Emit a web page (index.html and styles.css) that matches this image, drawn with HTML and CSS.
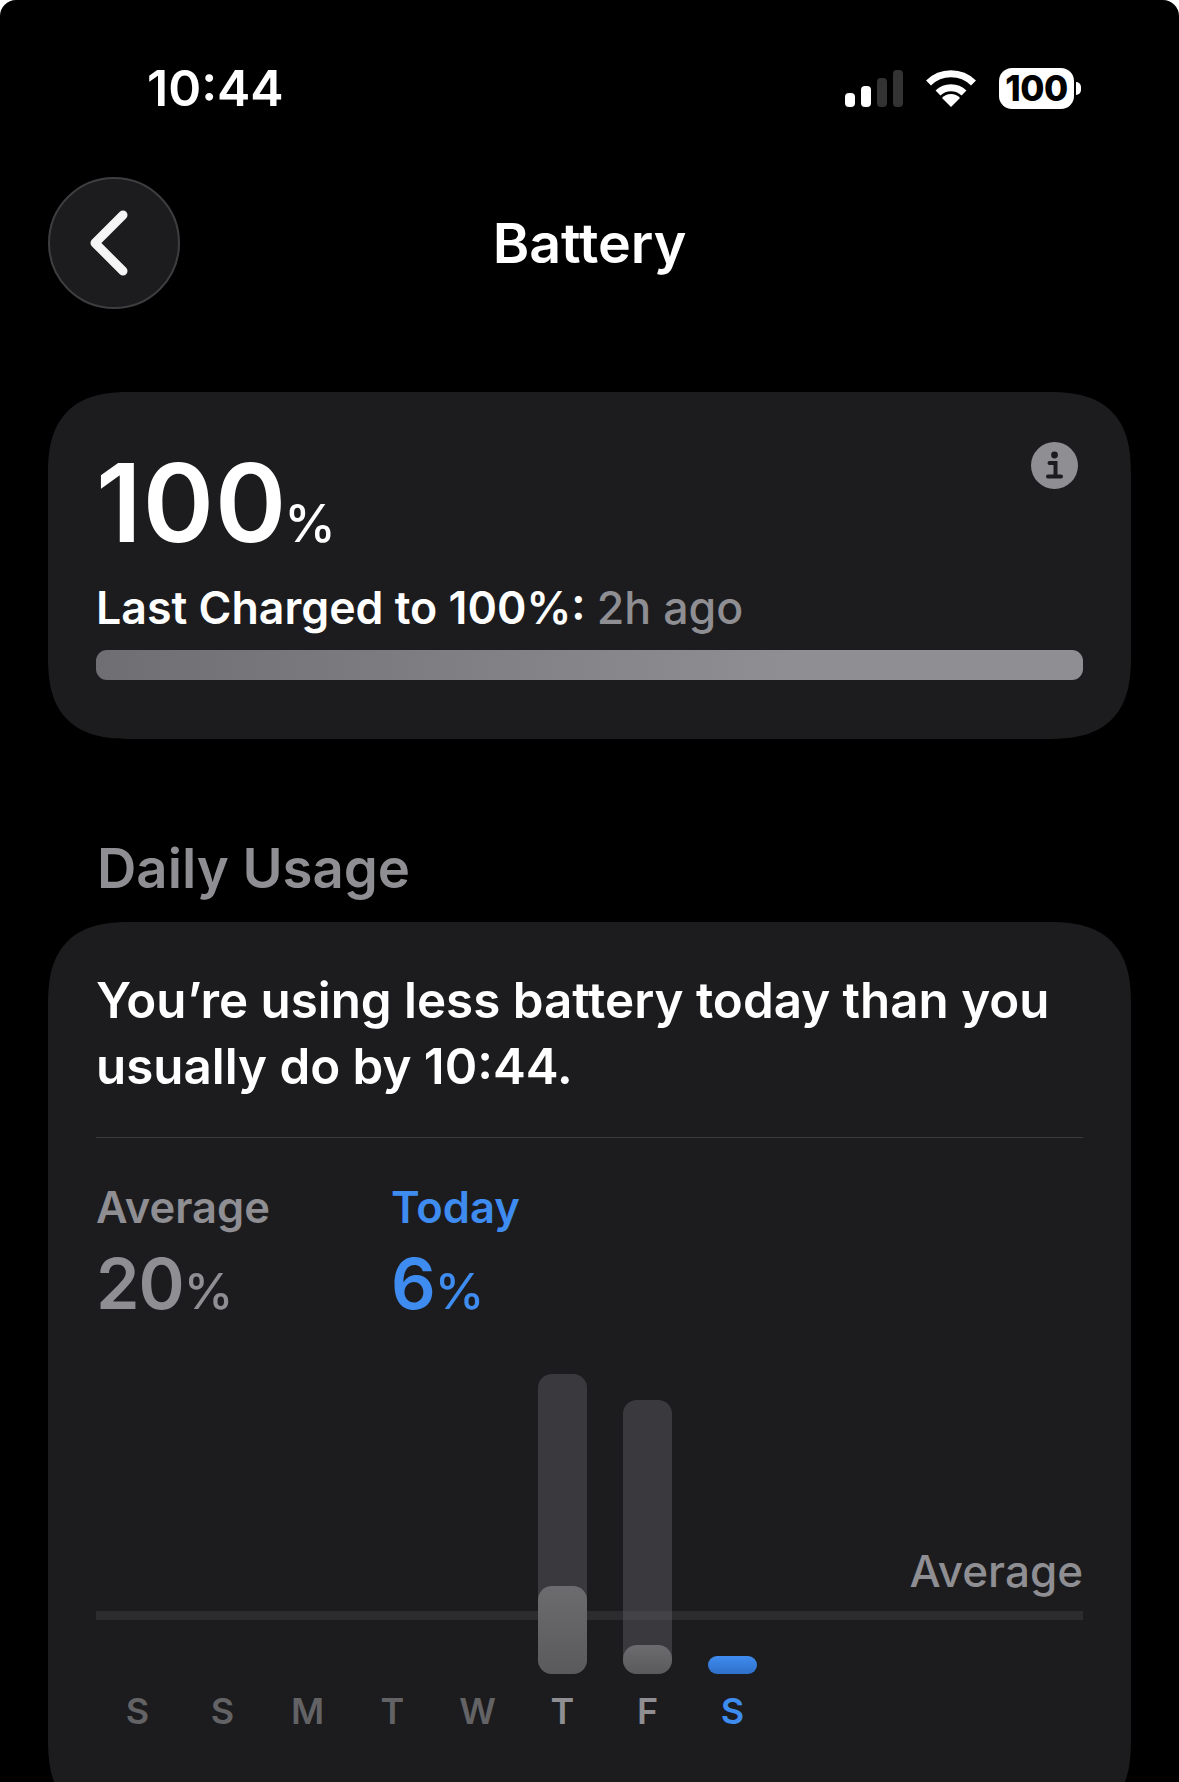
FILE: index.html
```html
<!DOCTYPE html>
<html lang="en">
<head>
<meta charset="utf-8">
<title>Battery</title>
<link rel="stylesheet" href="styles.css">
</head>
<body>
<div class="screen">
  <header class="status">
    <span class="time">10:44</span>
    <div class="status-icons">
      <svg class="signal" width="58" height="37" viewBox="0 0 58 37"><rect x="0" y="23" width="10" height="14" rx="4" fill="#fff"/><rect x="16" y="16" width="10" height="21" rx="4" fill="#fff"/><rect x="32" y="8" width="10" height="29" rx="4" fill="#333"/><rect x="48" y="0" width="10" height="37" rx="4" fill="#333"/></svg>
      <svg class="wifi" width="50" height="37" viewBox="0 0 50 37"><path d="M2.5 13 A32 32 0 0 1 47.5 13" fill="none" stroke="#fff" stroke-width="7"/><path d="M12 23 A18.5 18.5 0 0 1 38 23" fill="none" stroke="#fff" stroke-width="7"/><path d="M25 37 L16 28 A12 12 0 0 1 34 28 Z" fill="#fff"/></svg>
      <div class="batt"><span class="batt-body">100</span><span class="batt-tip"></span></div>
    </div>
  </header>
  <nav class="nav">
    <button class="back" aria-label="Back"><svg width="40" height="66" viewBox="0 0 40 66"><path d="M33 5 L5 33 L33 61" fill="none" stroke="#f5f5f5" stroke-width="9" stroke-linecap="round" stroke-linejoin="round"/></svg></button>
    <h1 class="title">Battery</h1>
  </nav>
  <section class="card level">
    <div class="level-top">
      <div class="big"><span class="big-num">100</span><span class="big-pct">%</span></div>
      <span class="info"><svg width="22" height="30" viewBox="0 0 22 30"><circle cx="10.5" cy="4" r="3.4" fill="#1c1c1e"/><path d="M5.5 12 H11.5 V25 M4 25.5 H17" fill="none" stroke="#1c1c1e" stroke-width="4" stroke-linecap="round"/></svg></span>
    </div>
    <p class="charged">Last Charged to 100%: <span class="muted">2h ago</span></p>
    <div class="bar"></div>
  </section>
  <h2 class="section-title">Daily Usage</h2>
  <section class="card usage">
    <p class="summary">You’re using less battery today than you usually do by 10:44.</p>
    <div class="rule"></div>
    <div class="stats">
      <div class="stat avg"><div class="stat-label">Average</div><div class="stat-val">20<span class="stat-pct">%</span></div></div>
      <div class="stat today"><div class="stat-label">Today</div><div class="stat-val">6<span class="stat-pct">%</span></div></div>
    </div>
    <div class="chart">
      <div class="avg-tag">Average</div>
      <div class="avg-line"></div>
      <div class="bars">
        <div class="col"></div><div class="col"></div><div class="col"></div><div class="col"></div><div class="col"></div>
        <div class="col"><div class="track track-t"><div class="fill fill-t"></div></div></div>
        <div class="col"><div class="track track-f"><div class="fill fill-f"></div></div></div>
        <div class="col"><div class="now"></div></div>
        <div class="col"></div><div class="col"></div>
      </div>
    </div>
    <div class="days">
      <span class="day dim">S</span><span class="day dim">S</span><span class="day dim">M</span><span class="day dim">T</span><span class="day dim">W</span><span class="day">T</span><span class="day">F</span><span class="day blue">S</span>
    </div>
  </section>
</div>
</body>
</html>
```
FILE: styles.css
```css
* { box-sizing: border-box; }
html, body { margin: 0; padding: 0; background: #fff; }
body { width: 1179px; height: 1782px; overflow: hidden; font-family: Inter, "Liberation Sans", sans-serif; color: #fff; }
.screen { width: 1179px; height: 1782px; overflow: hidden; padding: 0 48px; background: #000; border-radius: 16px 16px 0 0; }
.status { height: 156px; display: flex; align-items: center; justify-content: space-between; margin: 0 -48px; padding: 20px 98px 0 147px; }
.time { font-size: 50px; font-weight: 600; }
.status-icons { display: flex; align-items: center; gap: 22px; }
.signal { display: block; margin-right: 1px; }
.wifi { display: block; margin-right: 1px; }
.batt { display: flex; align-items: center; gap: 2px; }
.batt-body { width: 75px; height: 41px; border-radius: 13px; background: #fff; color: #000; font-size: 35px; font-weight: 800; display: flex; align-items: center; justify-content: center; letter-spacing: -0.5px; }
.batt-tip { width: 5px; height: 13px; background: #fff; border-radius: 0 5px 5px 0; }
.nav { height: 236px; position: relative; display: flex; align-items: flex-start; justify-content: center; }
.back { position: absolute; left: 0; top: 21px; width: 132px; height: 132px; border-radius: 50%; background: #1c1c1e; border: 2px solid #3e3e40; padding: 0 8px 0 0; display: flex; align-items: center; justify-content: center; }
.title { margin: 56px 0 0; font-size: 55.5px; line-height: 62px; font-weight: 600; }
.card { background: #1c1c1e; border-radius: 84px; corner-shape: superellipse(1.4); padding: 0 48px; }
.level { height: 347px; }
.level-top { display: flex; justify-content: space-between; align-items: flex-start; }
.big { margin-top: 63px; line-height: 96px; height: 96px; display: flex; align-items: baseline; }
.big-num { font-size: 108px; font-weight: 600; letter-spacing: 1px; }
.big-pct { font-size: 52px; font-weight: 500; margin-left: -3px; }
.info { margin-top: 50px; margin-right: 5px; width: 47px; height: 47px; border-radius: 50%; background: #8e8e93; display: flex; align-items: center; justify-content: center; }
.charged { margin: 31px 0 0; font-size: 44.7px; line-height: 52px; font-weight: 600; white-space: nowrap; }
.muted { color: #8e8e93; font-weight: 500; }
.bar { margin-top: 16px; height: 30px; border-radius: 11px; background: linear-gradient(90deg, #6f6f73, #8e8e93 70%); }
.section-title { margin: 98px 0 0 49px; font-size: 54.5px; line-height: 62px; font-weight: 600; color: #8e8e93; height: 85px; }
.usage { height: 900px; padding-top: 45px; }
.summary { margin: 0; font-size: 49.3px; line-height: 66px; font-weight: 600; }
.rule { margin-top: 38px; height: 1px; background: #3a3a3c; }
.stats { display: flex; margin-top: 38px; }
.stat { width: 295px; }
.stat-label { font-size: 43.5px; line-height: 62px; font-weight: 600; }
.stat-val { margin-top: 3px; font-size: 70px; line-height: 86px; font-weight: 600; letter-spacing: -1px; }
.stat-pct { font-size: 50px; font-weight: 500; letter-spacing: 0; }
.avg { color: #8e8e93; }
.today { color: #3f8cf0; }
.chart { position: relative; height: 300px; margin-top: 40px; }
.avg-tag { position: absolute; right: 0; top: 171px; font-size: 44px; line-height: 52px; font-weight: 500; color: #8e8e93; }
.avg-line { position: absolute; left: 0; right: 0; top: 237px; height: 9px; background: #2c2c2e; }
.bars { display: grid; grid-template-columns: repeat(10, 49px); column-gap: 36px; height: 100%; align-items: end; position: relative; padding-left: 17px; }
.col { height: 100%; display: flex; flex-direction: column; justify-content: flex-end; }
.track { border-radius: 14px; background: rgba(99, 99, 108, 0.42); display: flex; flex-direction: column; justify-content: flex-end; }
.track-t { height: 300px; }
.track-f { height: 274px; }
.fill { border-radius: 14px; background: linear-gradient(180deg, #6c6c6f, #5a5a5d); }
.fill-t { height: 88px; }
.fill-f { height: 29px; }
.now { height: 18px; border-radius: 9px; background: linear-gradient(180deg, #3f8cf0, #2f6fc8); }
.days { display: grid; grid-template-columns: repeat(10, 49px); column-gap: 36px; margin-top: 15px; padding-left: 17px; }
.day { text-align: center; font-size: 36px; line-height: 44px; font-weight: 600; color: #8e8e93; }
.dim { color: #636366; }
.blue { color: #3f8cf0; }
```
